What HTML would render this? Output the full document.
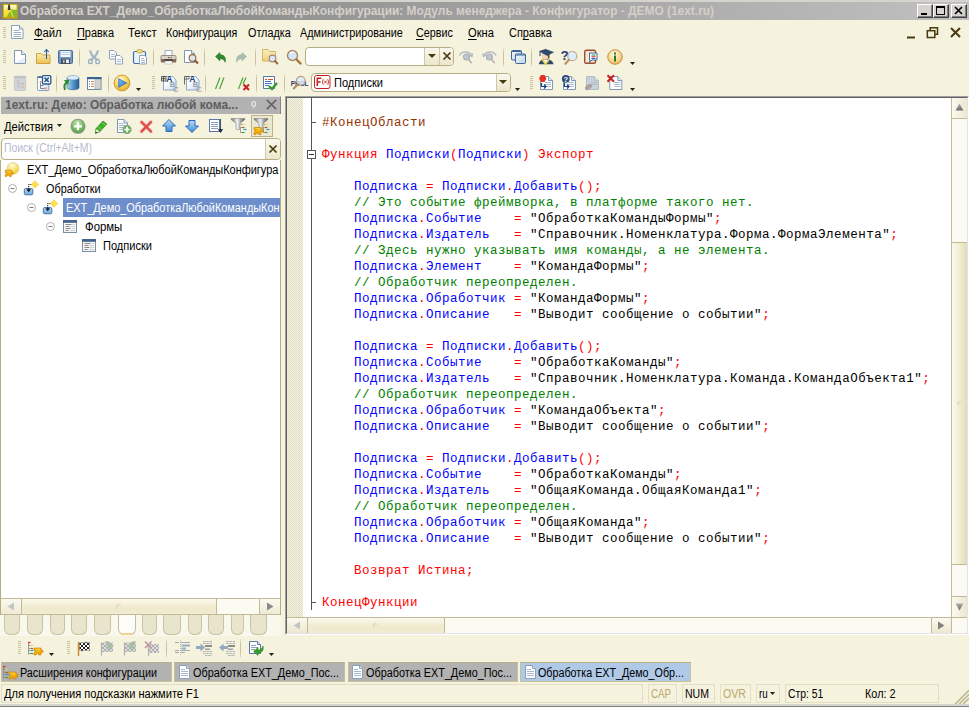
<!DOCTYPE html>
<html><head><meta charset="utf-8"><title>1C</title>
<style>
html,body{margin:0;padding:0}
body{width:969px;height:707px;overflow:hidden;position:relative;background:#f5f2dd;font-family:"Liberation Sans",sans-serif;font-size:11px;color:#000}
div,span.t,svg{position:absolute;box-sizing:border-box}
.t{white-space:pre}
u{text-decoration:underline;text-underline-offset:2px}
svg{overflow:visible}
#code{left:306px;top:98px;width:645px;height:519px;background:#fff;overflow:hidden;font-family:"Liberation Mono",monospace;font-size:12.5px;letter-spacing:0.5px;color:#00f}
#code .l{left:16px;white-space:pre;height:16px;line-height:16px}
.r{color:#f00}.g{color:#008000}.k{color:#000}.b{color:#963200}
</style></head><body>
<div style="left:0px;top:0px;width:969px;height:2px;background:#d6d3ce"></div>
<div style="left:0px;top:2px;width:969px;height:18px;background:linear-gradient(90deg,#808080,#c0c0c0)"></div>
<svg style="left:3px;top:3px" width="16" height="16" viewBox="0 0 16 16"><defs><linearGradient id="gap" x1="0" y1="0" x2="0" y2="1"><stop offset="0" stop-color="#fffbe4"/><stop offset=".45" stop-color="#f8e868"/><stop offset="1" stop-color="#f0d000"/></linearGradient></defs><rect x=".5" y="1.500" width="13.500" height="13.500" fill="url(#gap)" stroke="#d8b400" stroke-width="1"/><path d="M4 14l3.500-7.500L14 7v7z" fill="#8ab830"/><path d="M2 14L5.200 7M7.300 7l2.700 7" stroke="#f4e020" stroke-width="1.300" fill="none"/><path d="M5.300 1.500h1.600l.6 5.500h-2.800z" fill="#3a3a30"/><path d="M1 14.500h13" stroke="#c8a000" stroke-width="1"/></svg>
<span class="t" style="left:20px;top:3px;font-size:12px;line-height:16px;height:16px;font-weight:bold;transform:scaleX(0.9934);transform-origin:0 0;color:#d4d0c8;">Обработка EXT_Демо_ОбработкаЛюбойКомандыКонфигурации: Модуль менеджера - Конфигуратор - ДЕМО (1ext.ru)</span>
<div style="left:917px;top:4px;width:16px;height:14px;background:#d6d3ce;border:1px solid;border-color:#fff #404040 #404040 #fff;box-shadow:inset -1px -1px 0 #808080"></div>
<svg style="left:917px;top:4px" width="16" height="14" viewBox="0 0 16 14"><rect x="4" y="9" width="6" height="2" fill="#000"/></svg>
<div style="left:933px;top:4px;width:16px;height:14px;background:#d6d3ce;border:1px solid;border-color:#fff #404040 #404040 #fff;box-shadow:inset -1px -1px 0 #808080"></div>
<svg style="left:933px;top:4px" width="16" height="14" viewBox="0 0 16 14"><rect x="3.5" y="2.5" width="8" height="8" fill="none" stroke="#000"/><rect x="3" y="2" width="9" height="2" fill="#000"/></svg>
<div style="left:951px;top:4px;width:16px;height:14px;background:#d6d3ce;border:1px solid;border-color:#fff #404040 #404040 #fff;box-shadow:inset -1px -1px 0 #808080"></div>
<svg style="left:951px;top:4px" width="16" height="14" viewBox="0 0 16 14"><path d="M4 3l7 7M11 3l-7 7" stroke="#000" stroke-width="1.6"/></svg>
<div style="left:3px;top:27px;width:3px;height:11px;background:repeating-linear-gradient(#c9c2a0 0,#c9c2a0 1px,transparent 1px,transparent 2px)"></div>
<svg style="left:11px;top:25px" width="13" height="14" viewBox="0 0 13 14"><path d="M.5.5h8l3.500 3.500v9.500h-11.500z" fill="#fff" stroke="#8aa0b8"/><path d="M8.500.5v3.500h3.500" fill="#dfe8f2" stroke="#8aa0b8"/><path d="M2.500 5.500h6M2.500 7.500h7.500M2.500 9.500h7.500M2.500 11.500h7.500" stroke="#9db0c6"/></svg>
<span class="t" style="left:33.5px;top:25px;font-size:12px;line-height:16px;height:16px;transform:scaleX(0.9385);transform-origin:0 0;color:#000;"><u>Ф</u>айл</span>
<span class="t" style="left:77px;top:25px;font-size:12px;line-height:16px;height:16px;transform:scaleX(0.9125);transform-origin:0 0;color:#000;"><u>П</u>равка</span>
<span class="t" style="left:127.6px;top:25px;font-size:12px;line-height:16px;height:16px;transform:scaleX(0.9497);transform-origin:0 0;color:#000;">Текст</span>
<span class="t" style="left:166.3px;top:25px;font-size:12px;line-height:16px;height:16px;transform:scaleX(0.8854);transform-origin:0 0;color:#000;">Конфигурация</span>
<span class="t" style="left:247.5px;top:25px;font-size:12px;line-height:16px;height:16px;transform:scaleX(0.9001);transform-origin:0 0;color:#000;">Отладка</span>
<span class="t" style="left:300.1px;top:25px;font-size:12px;line-height:16px;height:16px;transform:scaleX(0.8983);transform-origin:0 0;color:#000;">Администрирование</span>
<span class="t" style="left:415.5px;top:25px;font-size:12px;line-height:16px;height:16px;transform:scaleX(0.8955);transform-origin:0 0;color:#000;"><u>С</u>ервис</span>
<span class="t" style="left:467.5px;top:25px;font-size:12px;line-height:16px;height:16px;transform:scaleX(0.9286);transform-origin:0 0;color:#000;"><u>О</u>кна</span>
<span class="t" style="left:508.5px;top:25px;font-size:12px;line-height:16px;height:16px;transform:scaleX(0.9091);transform-origin:0 0;color:#000;">Сп<u>р</u>авка</span>
<svg style="left:906px;top:26px" width="12" height="14" viewBox="0 0 12 14"><rect x="1" y="10.500" width="8" height="2" fill="#4a3a10"/></svg>
<svg style="left:926px;top:26px" width="13" height="14" viewBox="0 0 13 14"><path d="M4.200 4V1.800h7.300v6.500h-2.300" fill="none" stroke="#4a3a10" stroke-width="1.500"/><rect x="1.300" y="4.700" width="7.500" height="6.800" fill="none" stroke="#4a3a10" stroke-width="1.500"/></svg>
<svg style="left:949px;top:26px" width="13" height="14" viewBox="0 0 13 14"><path d="M2 2l9 9M11 2l-9 9" stroke="#4a3a10" stroke-width="2"/></svg>
<div style="left:3px;top:50px;width:3px;height:13px;background:repeating-linear-gradient(#c9c2a0 0,#c9c2a0 1px,transparent 1px,transparent 2px)"></div>
<svg style="left:12px;top:49px" width="16" height="16" viewBox="0 0 16 16"><path d="M2.500 1.500h7l4 4v9h-11z" fill="#fff" stroke="#7f97b5"/><path d="M9.500 1.500v4h4" fill="#e4ecf5" stroke="#7f97b5"/><path d="M3 14h10V8z" fill="#dbe6f3" opacity=".7"/></svg>
<svg style="left:35px;top:49px" width="16" height="16" viewBox="0 0 16 16"><defs><linearGradient id="gof" x1="0" y1="0" x2="0" y2="1"><stop offset="0" stop-color="#fbeeb8"/><stop offset="1" stop-color="#ecc050"/></linearGradient></defs><path d="M1.500 4.500h4.500l1.500 1.500h7.500v8.500h-13.500z" fill="url(#gof)" stroke="#c89c38" stroke-width=".9"/><path d="M11.500 10V.8M9.300 3l2.200-2.400 2.200 2.400" stroke="#2e6090" stroke-width="1.100" fill="none"/></svg>
<svg style="left:57px;top:49px" width="16" height="16" viewBox="0 0 16 16"><rect x="1.500" y="1.500" width="14" height="13" rx="1" fill="#7299c8" stroke="#456e9c"/><rect x="3.500" y="2" width="10" height="6" fill="#f4f8fc"/><path d="M4.500 3.500h8M4.500 5.500h8" stroke="#b4cce4"/><rect x="4.500" y="10" width="8" height="4.500" fill="#e8eef4" stroke="#48505c" stroke-width="1"/><rect x="5" y="10.500" width="4" height="3.500" fill="#48505c"/><rect x="6" y="11.500" width="1.500" height="2" fill="#e8eef4"/></svg>
<div style="left:79px;top:48px;width:1px;height:19px;background:linear-gradient(#ece8d2,#c9c2a0 25%,#c9c2a0 75%,#ece8d2)"></div>
<svg style="left:86px;top:49px" width="16" height="16" viewBox="0 0 16 16"><path d="M4 1.500c1 4 3 7 7.500 9.500M12 1.500c-1 4-3 7-7.500 9.500" stroke="#a3b5c8" stroke-width="2.200" fill="none"/><rect x="2.600" y="10.600" width="3.600" height="4" rx="1.400" fill="none" stroke="#97abc0" stroke-width="1.300"/><rect x="9.800" y="10.600" width="3.600" height="4" rx="1.400" fill="none" stroke="#97abc0" stroke-width="1.300"/></svg>
<svg style="left:108px;top:49px" width="16" height="16" viewBox="0 0 16 16"><path d="M1.500 1.500h4.500l2.500 2.500v6h-7z" fill="#fff" stroke="#8ea3bf"/><path d="M3 5.500h4M3 7.500h4" stroke="#a8b8cc"/><path d="M7.500 6.500h4.500l2.500 2.500v6h-7z" fill="#fff" stroke="#8ea3bf"/><path d="M9 10.500h4M9 12.500h4" stroke="#a8b8cc"/></svg>
<svg style="left:132px;top:49px" width="16" height="16" viewBox="0 0 16 16"><rect x="1.500" y="2.500" width="12" height="12" rx="1.500" fill="#eaf1f9" stroke="#3a6fb0" stroke-width="1.200"/><rect x="5" y=".8" width="5.500" height="3" rx="1.200" fill="#f6e27c" stroke="#b89a30" stroke-width=".8"/><path d="M7.500 6.500h5l2 2v6.500h-7z" fill="#fff" stroke="#8ea3bf"/><path d="M9 9.500h3M9 11.500h4M9 13.500h4" stroke="#a8b8cc"/></svg>
<div style="left:153px;top:48px;width:1px;height:19px;background:linear-gradient(#ece8d2,#c9c2a0 25%,#c9c2a0 75%,#ece8d2)"></div>
<svg style="left:160px;top:49px" width="16" height="16" viewBox="0 0 16 16"><rect x="5" y="1.500" width="7" height="5" fill="#fff" stroke="#9aaec4"/><path d="M2 6.500h13c.8 0 1 .5 1 1v5h-15v-5c0-.5.200-1 1-1z" fill="#d9d3cd" stroke="#8a7e76" stroke-width=".8"/><path d="M1 10h15v3.500h-15z" fill="#8a6a5a"/><rect x="4.500" y="10.500" width="8" height="2" fill="#222"/><rect x="5" y="12" width="7" height="3" fill="#fff" stroke="#b0b0b0" stroke-width=".6"/><rect x="8" y="8" width="1.500" height="1.200" fill="#e03020"/><rect x="10.500" y="8" width="1.500" height="1.200" fill="#30a030"/></svg>
<svg style="left:183px;top:49px" width="16" height="16" viewBox="0 0 16 16"><path d="M1.500 1.500h7l3 3v9h-10z" fill="#fff" stroke="#7f97b5"/><path d="M8.500 1.500v3h3" fill="#e4ecf5" stroke="#7f97b5"/><circle cx="9.500" cy="9" r="3.300" fill="#d8e9f8" stroke="#a06a48" stroke-width="1.200"/><path d="M12 11.500l3 3" stroke="#8a4a28" stroke-width="2"/></svg>
<div style="left:204px;top:48px;width:1px;height:19px;background:linear-gradient(#ece8d2,#c9c2a0 25%,#c9c2a0 75%,#ece8d2)"></div>
<svg style="left:213px;top:49px" width="16" height="16" viewBox="0 0 16 16"><path d="M2.500 7.500l4.500-4v2.300c3.500 0 5.500 1.800 5.500 5.500 0 .8-.2 1.500-.5 2C11.500 11 10 9.700 7 9.700v2.300z" fill="#2f8a2f" stroke="#1f6a1f" stroke-width=".5"/></svg>
<svg style="left:233px;top:49px" width="16" height="16" viewBox="0 0 16 16"><path d="M13.500 7.500L9 3.500v2.300c-3.500 0-5.500 1.800-5.500 5.500 0 .8.200 1.500.5 2C4.500 11 6 9.700 9 9.700v2.300z" fill="#a9bfae" stroke="#9ab3a0" stroke-width=".5"/></svg>
<div style="left:255px;top:48px;width:1px;height:19px;background:linear-gradient(#ece8d2,#c9c2a0 25%,#c9c2a0 75%,#ece8d2)"></div>
<svg style="left:262px;top:49px" width="16" height="16" viewBox="0 0 16 16"><defs><linearGradient id="gff" x1="0" y1="0" x2="0" y2="1"><stop offset="0" stop-color="#fbefc0"/><stop offset="1" stop-color="#efcf74"/></linearGradient></defs><path d="M.5 .5h5.500l1.500 2h6v9.500H.5z" fill="url(#gff)" stroke="#d0b060" stroke-width=".9"/><circle cx="10.500" cy="9.500" r="3.300" fill="#d8e9f8" stroke="#a88870" stroke-width="1.200"/><path d="M13 12l2.300 2.500" stroke="#a06840" stroke-width="2" stroke-linecap="round"/></svg>
<svg style="left:286px;top:49px" width="16" height="16" viewBox="0 0 16 16"><circle cx="6.500" cy="6.500" r="5" fill="#d3e6f8" stroke="#b08868" stroke-width="1.400"/><path d="M4 5a3 3 0 0 1 4-1.500" stroke="#fff" stroke-width="1.200" fill="none"/><path d="M10.500 10.500l4 4" stroke="#a8703c" stroke-width="2.400" stroke-linecap="round"/></svg>
<div style="left:305px;top:47px;width:149px;height:19px;background:#fff;border:1px solid #b7ad83;border-radius:4px"></div>
<div style="left:424px;top:48px;width:29px;height:17px;background:linear-gradient(#faf8ee,#ebe6cb);border-left:1px solid #cfc8a6;border-radius:0 3px 3px 0"></div>
<div style="left:439px;top:48px;width:1px;height:17px;background:#cfc8a6"></div>
<svg style="left:428px;top:54px" width="8" height="5" viewBox="0 0 8 5"><path d="M0 0h8l-4 4z" fill="#4a3a10"/></svg>
<svg style="left:442px;top:51px" width="10" height="10" viewBox="0 0 10 10"><path d="M1.500 1.500l7 7M8.500 1.500l-7 7" stroke="#4a3a10" stroke-width="1.700"/></svg>
<svg style="left:458px;top:49px" width="16" height="16" viewBox="0 0 16 16"><path d="M1.500 6.500c2-4.500 9-4.500 12-.5" fill="none" stroke="#b4bcc8" stroke-width="1.500"/><path d="M15.500 4l-1 4.500-3.700-2z" fill="#b4bcc8"/><circle cx="8.500" cy="8" r="3" fill="#bcc8d8" stroke="#b4acb4" stroke-width="1.100"/><path d="M10.500 10.500l2.700 3" stroke="#bcb0b0" stroke-width="1.800" stroke-linecap="round"/></svg>
<svg style="left:481px;top:49px" width="16" height="16" viewBox="0 0 16 16"><path d="M15 6.500c-2-4.500-9-4.500-12-.5" fill="none" stroke="#b4bcc8" stroke-width="1.500"/><path d="M1 4l1 4.500 3.700-2z" fill="#b4bcc8"/><circle cx="8.500" cy="8" r="3" fill="#bcc8d8" stroke="#b4acb4" stroke-width="1.100"/><path d="M10.500 10.500l2.700 3" stroke="#bcb0b0" stroke-width="1.800" stroke-linecap="round"/></svg>
<div style="left:503px;top:48px;width:1px;height:19px;background:linear-gradient(#ece8d2,#c9c2a0 25%,#c9c2a0 75%,#ece8d2)"></div>
<svg style="left:510px;top:49px" width="16" height="16" viewBox="0 0 16 16"><defs><linearGradient id="gw" x1="0" y1="0" x2="1" y2="1"><stop offset="0" stop-color="#f4f8fc"/><stop offset="1" stop-color="#bcd2ea"/></linearGradient></defs><rect x="1.500" y="1.500" width="10" height="9.500" rx="1" fill="url(#gw)" stroke="#3f6496"/><path d="M1.500 2.500h10" stroke="#3f6496"/><rect x="5.500" y="5" width="10" height="9.500" rx="1" fill="url(#gw)" stroke="#3f6496"/><path d="M5.500 6h10" stroke="#3f6496"/></svg>
<div style="left:531px;top:48px;width:1px;height:19px;background:linear-gradient(#ece8d2,#c9c2a0 25%,#c9c2a0 75%,#ece8d2)"></div>
<svg style="left:538px;top:49px" width="16" height="16" viewBox="0 0 16 16"><path d="M.8 15.200c.4-3 2.700-4.500 4.700-5h4.500c2.500.5 5 2 5.500 5z" fill="#2a4a6c"/><path d="M4.300 10.800l3.200 4.400 3.500-4.400" stroke="#f0c838" stroke-width="1.500" fill="#fff"/><path d="M4.500 4h6v4.500c0 2.700-6 2.700-6 0z" fill="#f4d8b8" stroke="#d0a880" stroke-width=".4"/><path d="M8.800 4h2.700v4.800l-1.800 1.200c.5-2 .3-4-.9-6z" fill="#6a4a30"/><path d="M1.500 2.300L7.500 .3l8 3-6.500 3.200z" fill="#2c4c70" stroke="#1c3450" stroke-width=".5"/><path d="M2 2.500v4.500" stroke="#1c3450" stroke-width=".9"/></svg>
<svg style="left:561px;top:49px" width="16" height="16" viewBox="0 0 16 16"><text x="-.6" y="11.300" font-family="Liberation Sans" font-weight="bold" font-size="13.500" fill="#1c3c78">?</text><circle cx="11.300" cy="7.200" r="4.500" fill="#dcebf9" stroke="#c4aa94" stroke-width="1.200"/><path d="M8 10.800l-3.600 4" stroke="#c09068" stroke-width="2.200" stroke-linecap="round"/><path d="M8.800 5.500a3 3 0 0 1 3-1.500" stroke="#fff" stroke-width="1" fill="none"/></svg>
<svg style="left:583px;top:49px" width="16" height="16" viewBox="0 0 16 16"><rect x="1.700" y="1.200" width="10.800" height="13" rx="1.500" fill="#fbe8d2" stroke="#9a5030" stroke-width="1.400"/><path d="M6.500 4h7.500v7h-5l-2.700 2.500 1-2.500h-.8z" fill="#fff" stroke="#2c5ca4" stroke-width=".9"/><path d="M8.500 6h4" stroke="#3a9a3a" stroke-width="1.100"/><path d="M8.500 7.800h4" stroke="#d03030" stroke-width="1.100"/><path d="M8.500 9.500h4" stroke="#3060c0" stroke-width="1.100"/></svg>
<svg style="left:607px;top:49px" width="16" height="16" viewBox="0 0 16 16"><defs><radialGradient id="gi" cx=".45" cy=".35" r=".75"><stop offset="0" stop-color="#fffaea"/><stop offset=".55" stop-color="#f8d690"/><stop offset="1" stop-color="#e8a840"/></radialGradient></defs><circle cx="8" cy="8" r="7.300" fill="url(#gi)" stroke="#c08a40" stroke-width=".9"/><rect x="7" y="6.500" width="2" height="6" fill="#2a7a2a"/><rect x="7" y="3.500" width="2" height="2" fill="#2a7a2a"/></svg>
<svg style="left:630px;top:62px" width="6" height="3" viewBox="0 0 6 3"><path d="M0 0h5l-2.500 3z" fill="#222"/></svg>
<div style="left:3px;top:76px;width:3px;height:13px;background:repeating-linear-gradient(#c9c2a0 0,#c9c2a0 1px,transparent 1px,transparent 2px)"></div>
<svg style="left:12px;top:76px" width="16" height="16" viewBox="0 0 16 16"><rect x="2.300" y=".3" width="11.400" height="14.200" rx=".8" fill="#d0d4d9" stroke="#c2c6cc" stroke-width=".8"/><rect x="2.300" y=".3" width="11.400" height="1.800" fill="#bcc0c8"/><path d="M6 5.500v5.500h4M6 7.800h4" stroke="#b4bcc8" stroke-width=".8" fill="none"/><rect x="5" y="3.700" width="2" height="1.800" fill="#e0b8a0"/><rect x="10" y="6.900" width="2" height="1.800" fill="#e0b8a0"/><rect x="10" y="10" width="2" height="1.800" fill="#e0b8a0"/></svg>
<svg style="left:36px;top:76px" width="16" height="16" viewBox="0 0 16 16"><defs><linearGradient id="gtx" x1="0" y1="0" x2="1" y2="1"><stop offset=".3" stop-color="#fff"/><stop offset="1" stop-color="#cce0f4"/></linearGradient></defs><rect x="1.500" y=".5" width="11.300" height="14" rx=".8" fill="url(#gtx)" stroke="#7f9cc0" stroke-width=".9"/><path d="M1.500 1.200h11.300" stroke="#3a6898" stroke-width="1.500"/><path d="M4.500 7v5.500h4M4.500 9.500h3" stroke="#6a6a6a" stroke-width=".8" fill="none"/><rect x="3.700" y="5" width="1.800" height="1.800" fill="#e09060"/><rect x="8.500" y="11.500" width="2" height="1.800" fill="#e09060"/><rect x="6.500" y="-.3" width="8.300" height="8.300" rx="1" fill="#fff" stroke="#2a5a8c" stroke-width="1.300"/><path d="M8.500 1.700l4.300 4.300M12.800 1.700l-4.300 4.300" stroke="#2a5a8c" stroke-width="1.700"/></svg>
<div style="left:56px;top:74px;width:1px;height:19px;background:linear-gradient(#ece8d2,#c9c2a0 25%,#c9c2a0 75%,#ece8d2)"></div>
<svg style="left:62px;top:76px" width="18" height="16" viewBox="0 0 18 16"><defs><linearGradient id="gdb" x1="0" x2="1"><stop offset="0" stop-color="#b0d6f2"/><stop offset=".45" stop-color="#5c9cd0"/><stop offset="1" stop-color="#245a92"/></linearGradient></defs><path d="M5 1.800v9.700c0 3 12 3 12 0V1.800z" fill="url(#gdb)" stroke="#2c5c94" stroke-width=".6"/><ellipse cx="11" cy="1.800" rx="6" ry="2.200" fill="#dceef9" stroke="#6a98c4" stroke-width=".6"/><path d="M3 13.800c-1.300-3.500-.5-6 2-7.500" fill="none" stroke="#2f8a2f" stroke-width="2"/><path d="M1.800 4.300l5.400-.6-1 5.300z" fill="#2f8a2f"/></svg>
<svg style="left:86px;top:76px" width="16" height="16" viewBox="0 0 16 16"><rect x="1.500" y="1.500" width="13.500" height="12" fill="#fff" stroke="#5c7ca4" stroke-width=".9"/><rect x="1" y="1" width="14.500" height="2.200" fill="#3a6494"/><rect x="9" y="3.500" width="5.500" height="9.500" fill="#d2d2d2" stroke="#a8a8a8" stroke-width=".6"/><path d="M3 5.500h1M3 8h1M3 10.500h1" stroke="#4a78b8"/><path d="M5 5.500h3M5 8h3M5 10.500h3" stroke="#d88858"/></svg>
<div style="left:108px;top:74px;width:1px;height:19px;background:linear-gradient(#ece8d2,#c9c2a0 25%,#c9c2a0 75%,#ece8d2)"></div>
<svg style="left:113px;top:74px" width="18" height="18" viewBox="0 0 18 18"><defs><radialGradient id="gp" cx=".42" cy=".3" r=".8"><stop offset="0" stop-color="#fffbe0"/><stop offset=".5" stop-color="#f8d458"/><stop offset="1" stop-color="#dc9c20"/></radialGradient><linearGradient id="gpt" x1="0" y1="0" x2="1" y2="1"><stop offset="0" stop-color="#7cc0f8"/><stop offset="1" stop-color="#2c74d0"/></linearGradient></defs><circle cx="9" cy="9" r="7.900" fill="url(#gp)" stroke="#c8942c" stroke-width=".9"/><path d="M5.700 4.700l8 4.300-8 4.300z" fill="url(#gpt)" stroke="#2a62b0" stroke-width=".7"/></svg>
<svg style="left:136px;top:88px" width="6" height="3" viewBox="0 0 6 3"><path d="M0 0h5l-2.500 3z" fill="#222"/></svg>
<div style="left:152px;top:76px;width:3px;height:13px;background:repeating-linear-gradient(#c9c2a0 0,#c9c2a0 1px,transparent 1px,transparent 2px)"></div>
<svg style="left:161px;top:75px" width="18" height="17" viewBox="0 0 18 17"><defs><linearGradient id="gabc" x1="0" y1="0" x2="1" y2="1"><stop offset=".3" stop-color="#fff"/><stop offset="1" stop-color="#c4dcf2"/></linearGradient></defs><path d="M2.500 1.500h9l3.500 3.500v10h-12.500z" fill="url(#gabc)" stroke="#86a0c0" stroke-width=".9"/><text x="5.300" y="6.600" font-family="Liberation Sans" font-weight="bold" font-size="8.500" fill="#1c3c78">A</text><text x="8.800" y="12" font-family="Liberation Sans" font-size="8" fill="#7c8088">B</text><text x="12" y="16.800" font-family="Liberation Sans" font-size="8" fill="#8c9098">C</text><path d="M.5 1.500h4.500v4.500h-4.500zM.5 3.700h4.500M2.700 1.500v4.500" stroke="#3a3a3a" stroke-width=".8" fill="none"/></svg>
<svg style="left:184px;top:75px" width="18" height="17" viewBox="0 0 18 17"><defs><linearGradient id="gabc" x1="0" y1="0" x2="1" y2="1"><stop offset=".3" stop-color="#fff"/><stop offset="1" stop-color="#c4dcf2"/></linearGradient></defs><path d="M2.500 1.500h9l3.500 3.500v10h-12.500z" fill="url(#gabc)" stroke="#86a0c0" stroke-width=".9"/><text x="5.300" y="6.600" font-family="Liberation Sans" font-weight="bold" font-size="8.500" fill="#1c3c78">A</text><text x="8.800" y="12" font-family="Liberation Sans" font-size="8" fill="#7c8088">B</text><text x="12" y="16.800" font-family="Liberation Sans" font-size="8" fill="#8c9098">C</text><path d="M.5 1.500h4.500v2.500h-4.500zM.5 4v5.500" stroke="#4a4a4a" stroke-width=".8" fill="none"/></svg>
<div style="left:205px;top:74px;width:1px;height:19px;background:linear-gradient(#ece8d2,#c9c2a0 25%,#c9c2a0 75%,#ece8d2)"></div>
<svg style="left:213px;top:75px" width="16" height="16" viewBox="0 0 16 16"><path d="M2.500 14L7 2.500M6.500 14L11 2.500" stroke="#4aa83a" stroke-width="1.200"/></svg>
<svg style="left:236px;top:75px" width="16" height="16" viewBox="0 0 16 16"><path d="M2.500 14L7 2.500M7 9l3-6.500" stroke="#4aa83a" stroke-width="1.200"/><path d="M7.500 9.500l5.500 5.500M13 9.500l-5.500 5.500" stroke="#c82020" stroke-width="2"/></svg>
<div style="left:256px;top:74px;width:1px;height:19px;background:linear-gradient(#ece8d2,#c9c2a0 25%,#c9c2a0 75%,#ece8d2)"></div>
<svg style="left:262px;top:75px" width="16" height="16" viewBox="0 0 16 16"><path d="M1.500 1.500h11v12h-11z" fill="#fff" stroke="#5a78a8"/><path d="M3 4.500h2M6 4.500h5" stroke="#d05030"/><path d="M3 6.500h6M3 8.500h7" stroke="#4a78c0"/><path d="M3 10.500h4" stroke="#4a78c0"/><path d="M7 11l3 3 5-6" stroke="#2f9a2f" stroke-width="2.400" fill="none"/></svg>
<div style="left:284px;top:74px;width:1px;height:19px;background:linear-gradient(#ece8d2,#c9c2a0 25%,#c9c2a0 75%,#ece8d2)"></div>
<svg style="left:290px;top:75px" width="18" height="16" viewBox="0 0 18 16"><text x=".8" y="10.500" font-family="Liberation Sans" font-weight="bold" font-size="6.500" fill="#1c3c78" letter-spacing="-.1">PROL</text><circle cx="10.800" cy="5.700" r="4.300" fill="#d8e9f8" fill-opacity=".8" stroke="#b8a090" stroke-width="1.200"/><path d="M7.800 9.200l-4 4.300" stroke="#b88858" stroke-width="2" stroke-linecap="round"/></svg>
<div style="left:311px;top:73px;width:200px;height:19px;background:#fff;border:1px solid #b7ad83;border-radius:4px"></div>
<div style="left:496px;top:74px;width:14px;height:17px;background:linear-gradient(#faf8ee,#ebe6cb);border-left:1px solid #cfc8a6;border-radius:0 3px 3px 0"></div>
<svg style="left:499px;top:80px" width="8" height="5" viewBox="0 0 8 5"><path d="M0 0h8l-4 4z" fill="#4a3a10"/></svg>
<svg style="left:314px;top:75px" width="17" height="14" viewBox="0 0 17 14"><rect x=".5" y=".5" width="15.500" height="13" rx="2" fill="#fff" stroke="#c42020"/><path d="M3.300 11V3.300h4M3.300 7h3.200" stroke="#c42020" stroke-width="1.500" fill="none"/><path d="M9.300 4.200c-1 1.500-1 4 0 5.600M13.700 4.200c1 1.500 1 4 0 5.600" stroke="#c42020" stroke-width=".9" fill="none"/><path d="M10.300 5.600l2.400 2.800M12.700 5.600l-2.400 2.800" stroke="#c42020" stroke-width=".9"/></svg>
<span class="t" style="left:334.2px;top:75px;font-size:12px;line-height:16px;height:16px;transform:scaleX(0.9210);transform-origin:0 0;color:#000;">Подписки</span>
<svg style="left:515px;top:88px" width="6" height="3" viewBox="0 0 6 3"><path d="M0 0h5l-2.500 3z" fill="#222"/></svg>
<div style="left:530px;top:76px;width:3px;height:13px;background:repeating-linear-gradient(#c9c2a0 0,#c9c2a0 1px,transparent 1px,transparent 2px)"></div>
<svg style="left:538px;top:74px" width="16" height="17" viewBox="0 0 16 17"><path d="M2.500 2.500h8l4 4v9h-12z" fill="#fff" stroke="#7f97b5"/><path d="M10.500 2.500v4h4" fill="#e4ecf5" stroke="#7f97b5"/><path d="M7 8.500h6M7 10.500h6M7 12.500h6" stroke="#a8bcd4"/><path d="M3.500 9v3.500h4M6 10.500l2 2-2 2" stroke="#1c3c78" stroke-width="1.200" fill="none"/><path d="M3 1l3.500 0 2 3.500-2 3.500h-3.500l-2-3.500z" fill="#e83020"/></svg>
<svg style="left:560.5px;top:74px" width="16" height="17" viewBox="0 0 16 17"><path d="M2.500 2.500h8l4 4v9h-12z" fill="#fff" stroke="#7f97b5"/><path d="M10.500 2.500v4h4" fill="#e4ecf5" stroke="#7f97b5"/><path d="M7 8.500h6M7 10.500h6M7 12.500h6" stroke="#a8bcd4"/><path d="M3.500 9v3.500h4M6 10.500l2 2-2 2" stroke="#1c3c78" stroke-width="1.200" fill="none"/><circle cx="4.800" cy="4.800" r="3.900" fill="#2a4a78"/><text x="2.600" y="7.600" font-family="Liberation Sans" font-weight="bold" font-size="7.500" fill="#fff">?</text></svg>
<svg style="left:584px;top:74px" width="16" height="17" viewBox="0 0 16 17"><path d="M2.500 2.500h8l4 4v9h-12z" fill="#c8d0d8" stroke="#b4bcc8"/><path d="M10.500 2.500v4h4" fill="#d8dee6" stroke="#b4bcc8"/><path d="M7 8.500h6M7 10.500h6" stroke="#b0bac6"/><ellipse cx="4.500" cy="13" rx="4" ry="2.300" transform="rotate(-35 4.500 13)" fill="#a8a4a4"/></svg>
<svg style="left:606px;top:74px" width="16" height="17" viewBox="0 0 16 17"><g transform="translate(1.300 0)"><path d="M2.500 2.500h8l4 4v9h-12z" fill="#fff" stroke="#7f97b5"/><path d="M10.500 2.500v4h4" fill="#e4ecf5" stroke="#7f97b5"/><path d="M7 8.500h6M7 10.500h6M7 12.500h6" stroke="#a8bcd4"/></g><path d="M1.500 1.300l6.500 6.500M8 1.300l-6.500 6.500" stroke="#c82020" stroke-width="2"/></svg>
<svg style="left:630px;top:88px" width="6" height="3" viewBox="0 0 6 3"><path d="M0 0h5l-2.500 3z" fill="#222"/></svg>
<div style="left:1px;top:96px;width:280px;height:18px;background:#b2b2b2;border-top:1px solid #e4e4e4;border-right:1px solid #858585"></div>
<span class="t" style="left:5px;top:97px;font-size:12px;line-height:16px;height:16px;font-weight:bold;transform:scaleX(0.9960);transform-origin:0 0;color:#5e5e5e;">1ext.ru: Демо: Обработка любой кома...</span>
<svg style="left:251.3px;top:101px" width="6" height="9" viewBox="0 0 6 9"><rect x="1" y=".5" width="3.600" height="4.800" rx="1.300" fill="#b8b8b8" stroke="#f4f4f4" stroke-width="1"/><rect x="2.400" y="5.500" width=".9" height="2.200" fill="#e4e4e4"/></svg>
<svg style="left:266px;top:99.3px" width="11" height="11" viewBox="0 0 11 11"><path d="M.8 .8l9.400 9.400M10.200 .8l-9.400 9.400" stroke="#666" stroke-width="1.700"/></svg>
<span class="t" style="left:4.3px;top:119px;font-size:12px;line-height:16px;height:16px;transform:scaleX(0.9319);transform-origin:0 0;color:#000;">Действия</span>
<svg style="left:57px;top:124px" width="6" height="3" viewBox="0 0 6 3"><path d="M0 0h5l-2.500 3z" fill="#222"/></svg>
<div style="left:251px;top:115px;width:22px;height:22px;background:#ece8d0;border:1.500px solid #bab28e"></div>
<svg style="left:70px;top:118px" width="16" height="16" viewBox="0 0 16 16"><defs><radialGradient id="gg" cx=".45" cy=".25" r=".85"><stop offset="0" stop-color="#c4e8b0"/><stop offset=".55" stop-color="#74b860"/><stop offset="1" stop-color="#4a9838"/></radialGradient></defs><circle cx="8" cy="8.300" r="7" fill="url(#gg)" stroke="#8a988a" stroke-width="1.100"/><path d="M8 4.300v8M4 8.300h8" stroke="#fff" stroke-width="2.200"/></svg>
<svg style="left:93px;top:118px" width="16" height="16" viewBox="0 0 16 16"><path d="M3.200 10.500l6.800-7.500 3.800 3-6.800 7.500-4.500 1.800z" fill="#3cb424" stroke="#1f7a1f" stroke-width=".7"/><path d="M5 8.800l3.600 3M9 4.500l3.500 2.800" stroke="#8ae070" stroke-width=".7"/><path d="M3.200 10.500l3.800 3-4.500 1.800z" fill="#fbf4e0" stroke="#1f7a1f" stroke-width=".5"/><path d="M2.500 15.300l1.600-.6-1-.9z" fill="#222"/></svg>
<svg style="left:116px;top:118px" width="16" height="16" viewBox="0 0 16 16"><path d="M1.500 1.500h6.500l3.500 3.500v9.500h-10z" fill="#fff" stroke="#7f97b5"/><path d="M8 1.500v3.500h3.500" fill="#e4ecf5" stroke="#7f97b5"/><path d="M3 5.500h4M3 7.500h6M3 9.500h5M3 11.500h3" stroke="#a8b8cc"/><circle cx="11" cy="11.500" r="4.200" fill="#68b454" stroke="#90a090" stroke-width=".9"/><path d="M11 8.800v5.400M8.300 11.500h5.400" stroke="#fff" stroke-width="1.700"/></svg>
<svg style="left:138px;top:118px" width="16" height="16" viewBox="0 0 16 16"><path d="M3.500 4l9.500 9.500M13 4l-9.500 9.500" stroke="#f0a8a0" stroke-width="3.200" stroke-linecap="round"/><path d="M3.500 4l9.500 9.500M13 4l-9.500 9.500" stroke="#de4a40" stroke-width="1.900" stroke-linecap="round"/></svg>
<svg style="left:161px;top:118px" width="16" height="16" viewBox="0 0 16 16"><defs><linearGradient id="gu" x1="0" y1="0" x2="0" y2="1"><stop offset="0" stop-color="#b8dcf8"/><stop offset="1" stop-color="#3f8ad8"/></linearGradient></defs><path d="M8 1.500l6.500 6.500h-3.500v5.500h-6v-5.500h-3.500z" fill="url(#gu)" stroke="#2f6ab8" stroke-width="1"/></svg>
<svg style="left:184px;top:118px" width="16" height="16" viewBox="0 0 16 16"><defs><linearGradient id="gd" x1="0" y1="0" x2="0" y2="1"><stop offset="0" stop-color="#b8dcf8"/><stop offset="1" stop-color="#3f8ad8"/></linearGradient></defs><path d="M8 14.500l6.500-6.500h-3.500v-5.500h-6v5.500h-3.500z" fill="url(#gd)" stroke="#2f6ab8" stroke-width="1"/></svg>
<svg style="left:208px;top:118px" width="16" height="16" viewBox="0 0 16 16"><rect x="1.500" y="1.500" width="10" height="12" fill="#fff" stroke="#5a78a8"/><path d="M3 4.500h7M3 6.500h7M3 8.500h7M3 10.500h7" stroke="#8aa0c0"/><path d="M12.500 1v12M10.500 11.500l2 3 2-3z" stroke="#1c2c48" fill="#1c2c48" stroke-width=".8"/></svg>
<svg style="left:230px;top:117.5px" width="18" height="16" viewBox="0 0 18 16"><defs><linearGradient id="gf" x1="0" x2="1"><stop offset="0" stop-color="#6a6a6a"/><stop offset=".45" stop-color="#f4f4f4"/><stop offset=".7" stop-color="#a0a0a0"/><stop offset="1" stop-color="#5a5a5a"/></linearGradient></defs><path d="M1 .5h14l-.3 1.200-4.700 4v5c0 1.300-4 1.300-4 0v-5l-4.700-4z" fill="url(#gf)" stroke="#787878" stroke-width=".5"/><path d="M10.500 9v6M10.500 6.500h1.500M10.500 9.500h1.500M13 11.500h1M10.500 14.500h1.500" stroke="#909090" stroke-width=".8" fill="none"/><path d="M12 6.500h2.500" stroke="#f4d040" stroke-width="1.200"/><path d="M12 9.500h2.500" stroke="#b85c20" stroke-width="1.200"/><path d="M14 11.500h2.500" stroke="#18a0e0" stroke-width="1.200"/><path d="M12 14.500h2.500" stroke="#409838" stroke-width="1.200"/><path d="M14.500 6.500h1.500M14.500 9.500h1.500M14.500 14.500h1.500" stroke="#d8d8d0" stroke-width="1"/></svg>
<svg style="left:253px;top:117.5px" width="18" height="16" viewBox="0 0 18 16"><defs><linearGradient id="gf" x1="0" x2="1"><stop offset="0" stop-color="#6a6a6a"/><stop offset=".45" stop-color="#f4f4f4"/><stop offset=".7" stop-color="#a0a0a0"/><stop offset="1" stop-color="#5a5a5a"/></linearGradient></defs><path d="M1 .5h14l-.3 1.200-4.700 4v5c0 1.300-4 1.300-4 0v-5l-4.700-4z" fill="url(#gf)" stroke="#787878" stroke-width=".5"/><path d="M10.500 9v6M10.500 6.500h1.500M10.500 9.500h1.500M13 11.500h1M10.500 14.500h1.500" stroke="#909090" stroke-width=".8" fill="none"/><path d="M12 6.500h2.500" stroke="#f4d040" stroke-width="1.200"/><path d="M12 9.500h2.500" stroke="#b85c20" stroke-width="1.200"/><path d="M14 11.500h2.500" stroke="#18a0e0" stroke-width="1.200"/><path d="M12 14.500h2.500" stroke="#409838" stroke-width="1.200"/><path d="M14.500 6.500h1.500M14.500 9.500h1.500M14.500 14.500h1.500" stroke="#d8d8d0" stroke-width="1"/><g transform="translate(1 9.5) scale(1)"><path d="M0 0h7v1.500l2 1v2l-2-.5v3h-2.500v-1.500h-1.500l-1 1.500h-2v-2l1.500-1.500-1.500-1z" fill="#f2ac08" stroke="#c07c00" stroke-width=".6"/><path d="M1.500 1.200h4.500l-2 2.300" stroke="#f8d850" stroke-width=".9" fill="none"/></g></svg>
<div style="left:1px;top:138px;width:280px;height:22px;background:#fff;border:1px solid #b7ad83;border-radius:4px"></div>
<div style="left:265px;top:139px;width:15px;height:20px;background:linear-gradient(#faf8ee,#ebe6cb);border-left:1px solid #cfc8a6;border-radius:0 3px 3px 0"></div>
<svg style="left:268px;top:144px" width="10" height="10" viewBox="0 0 10 10"><path d="M1.500 1.500l7 7M8.500 1.500l-7 7" stroke="#4a3a10" stroke-width="1.700"/></svg>
<span class="t" style="left:4px;top:140px;font-size:12px;line-height:16px;height:16px;transform:scaleX(0.8690);transform-origin:0 0;color:#b6bace;">Поиск (Ctrl+Alt+M)</span>
<div style="left:0px;top:160px;width:281px;height:455px;background:#fff;border:1px solid #b7ad83;border-top:none;border-bottom:none"></div>
<svg style="left:3px;top:161px" width="18" height="17" viewBox="0 0 18 17"><defs><radialGradient id="gy" cx=".45" cy=".25" r=".8"><stop offset="0" stop-color="#fffbe4"/><stop offset=".5" stop-color="#f8e070"/><stop offset="1" stop-color="#eec430"/></radialGradient></defs><circle cx="9.900" cy="7.400" r="6" fill="url(#gy)" stroke="#dccc98" stroke-width=".7"/><g transform="translate(2.2 9.3) scale(0.88)"><path d="M0 0h7v1.500l2 1v2l-2-.5v3h-2.500v-1.500h-1.500l-1 1.500h-2v-2l1.500-1.500-1.500-1z" fill="#f2ac08" stroke="#c07c00" stroke-width=".6"/><path d="M1.500 1.200h4.500l-2 2.300" stroke="#f8d850" stroke-width=".9" fill="none"/></g></svg>
<span class="t" style="left:26.8px;top:162px;font-size:12px;line-height:16px;height:16px;transform:scaleX(0.9130);transform-origin:0 0;width:276.56px;overflow:hidden;color:#000;">EXT_Демо_ОбработкаЛюбойКомандыКонфигура</span>
<svg style="left:8px;top:184px" width="9" height="9" viewBox="0 0 9 9"><circle cx="4.500" cy="4.500" r="4" fill="#fff" stroke="#a8a8a8" stroke-width=".9"/><path d="M2.500 4.500h4" stroke="#777" stroke-width="1"/></svg>
<svg style="left:23px;top:181px" width="17" height="15" viewBox="0 0 17 15"><defs><linearGradient id="gpb" x1="0" y1="0" x2="0" y2="1"><stop offset="0" stop-color="#b4daf4"/><stop offset="1" stop-color="#6aa8dc"/></linearGradient></defs><rect x="1.300" y="7.500" width="8.500" height="6.300" rx="1.300" fill="url(#gpb)" stroke="#3a6aa8" stroke-width=".9"/><path d="M5.700 8.500V3.500h3.500" stroke="#111" stroke-width="1" stroke-dasharray="1.300 .9" fill="none"/><path d="M3.300 8.300h4.800l-2.400 2.900z" fill="#111"/><path d="M12 -.3l3.800 3.800-3.800 3.800-3.800-3.800z" fill="#fbe04c" stroke="#ecc43c" stroke-width=".5"/></svg>
<span class="t" style="left:45.8px;top:181px;font-size:12px;line-height:16px;height:16px;transform:scaleX(0.9039);transform-origin:0 0;color:#000;">Обработки</span>
<svg style="left:27px;top:203px" width="9" height="9" viewBox="0 0 9 9"><circle cx="4.500" cy="4.500" r="4" fill="#fff" stroke="#a8a8a8" stroke-width=".9"/><path d="M2.500 4.500h4" stroke="#777" stroke-width="1"/></svg>
<svg style="left:42px;top:200px" width="17" height="15" viewBox="0 0 17 15"><defs><linearGradient id="gpb" x1="0" y1="0" x2="0" y2="1"><stop offset="0" stop-color="#b4daf4"/><stop offset="1" stop-color="#6aa8dc"/></linearGradient></defs><rect x="1.300" y="7.500" width="8.500" height="6.300" rx="1.300" fill="url(#gpb)" stroke="#3a6aa8" stroke-width=".9"/><path d="M5.700 8.500V3.500h3.500" stroke="#111" stroke-width="1" stroke-dasharray="1.300 .9" fill="none"/><path d="M3.300 8.300h4.800l-2.400 2.900z" fill="#111"/><path d="M12 -.3l3.800 3.800-3.800 3.800-3.800-3.800z" fill="#fbe04c" stroke="#ecc43c" stroke-width=".5"/></svg>
<div style="left:63px;top:198px;width:217px;height:19px;background:#6d8ecb"></div>
<span class="t" style="left:65.8px;top:200px;font-size:12px;line-height:16px;height:16px;transform:scaleX(0.9077);transform-origin:0 0;width:235.75px;overflow:hidden;color:#fff;">EXT_Демо_ОбработкаЛюбойКомандыКон</span>
<svg style="left:46px;top:222px" width="9" height="9" viewBox="0 0 9 9"><circle cx="4.500" cy="4.500" r="4" fill="#fff" stroke="#a8a8a8" stroke-width=".9"/><path d="M2.500 4.500h4" stroke="#777" stroke-width="1"/></svg>
<svg style="left:63px;top:220px" width="14" height="13" viewBox="0 0 14 13"><rect x=".5" y=".5" width="13" height="12" fill="#f6f6f6" stroke="#7a8ea8"/><rect x=".5" y=".5" width="13" height="1.800" fill="#46648c" stroke="#46648c"/><path d="M2.500 4.500h6M2.500 6.500h4M2.500 8.500h5M2.500 10.500h3" stroke="#8a8a8a"/><path d="M9.500 4.500h2.500M7.500 6.500h4.500M8.500 8.500h3.500M6.500 10.500h5.500" stroke="#d0d0d0"/></svg>
<span class="t" style="left:85px;top:219px;font-size:12px;line-height:16px;height:16px;transform:scaleX(0.9477);transform-origin:0 0;color:#000;">Формы</span>
<svg style="left:82px;top:239px" width="14" height="13" viewBox="0 0 14 13"><rect x=".5" y=".5" width="13" height="12" fill="#f6f6f6" stroke="#7a8ea8"/><rect x=".5" y=".5" width="13" height="1.800" fill="#46648c" stroke="#46648c"/><path d="M2.500 4.500h6M2.500 6.500h4M2.500 8.500h5M2.500 10.500h3" stroke="#8a8a8a"/><path d="M9.500 4.500h2.500M7.500 6.500h4.500M8.500 8.500h3.500M6.500 10.500h5.500" stroke="#d0d0d0"/></svg>
<span class="t" style="left:103.4px;top:238px;font-size:12px;line-height:16px;height:16px;transform:scaleX(0.9210);transform-origin:0 0;color:#000;">Подписки</span>
<div style="left:1px;top:598px;width:279px;height:17px;background:#fbfaf3;border-top:1px solid #c2ba94;border-bottom:1px solid #c2ba94"></div>
<div style="left:1px;top:599px;width:20.5px;height:15px;background:linear-gradient(#fbfaf0,#eeead3);border-right:1px solid #c2ba94"></div>
<div style="left:21.5px;top:599px;width:195px;height:15px;background:linear-gradient(#fbf9ee,#efe9cc 60%,#f1ecd2);border-right:1px solid #c2ba94"></div>
<div style="left:259px;top:599px;width:21px;height:15px;background:linear-gradient(#fbfaf0,#eeead3);border-left:1px solid #c2ba94"></div>
<svg style="left:7px;top:602px" width="8" height="9" viewBox="0 0 8 9"><path d="M7 .5v8L.5 4.500z" fill="#c4c4c4"/></svg>
<svg style="left:266px;top:602px" width="8" height="9" viewBox="0 0 8 9"><path d="M1 .5v8l6.500-4z" fill="#8a8a8a"/></svg>
<div style="left:116px;top:604px;width:5px;height:5px;background:radial-gradient(circle at 65% 65%,#f4f0dc,#d2ccac);border-radius:3px"></div>
<div style="left:0px;top:615px;width:281px;height:20.5px;background:#f9f8ec"></div>
<div style="left:3.7px;top:615px;width:16.7px;height:20px;background:#e9e4cc;border:1px solid #c9c2a3;border-top:none;border-radius:0 0 6px 6px"></div>
<div style="left:27.2px;top:615px;width:15.5px;height:20px;background:#e9e4cc;border:1px solid #c9c2a3;border-top:none;border-radius:0 0 6px 6px"></div>
<div style="left:49.5px;top:615px;width:15.5px;height:20px;background:#e9e4cc;border:1px solid #c9c2a3;border-top:none;border-radius:0 0 6px 6px"></div>
<div style="left:71.2px;top:615px;width:16.1px;height:20px;background:#e9e4cc;border:1px solid #c9c2a3;border-top:none;border-radius:0 0 6px 6px"></div>
<div style="left:94.4px;top:615px;width:17.1px;height:20px;background:#e9e4cc;border:1px solid #c9c2a3;border-top:none;border-radius:0 0 6px 6px"></div>
<div style="left:118.3px;top:615px;width:17.3px;height:20px;background:#fdfdf8;border:1px solid #c5bea0;border-top:none;border-radius:0 0 6px 6px"></div>
<div style="left:121.3px;top:632.5px;width:11.3px;height:2px;background:#f6cf8c;border-radius:0 0 2px 2px"></div>
<div style="left:142.4px;top:615px;width:14.6px;height:20px;background:#e9e4cc;border:1px solid #c9c2a3;border-top:none;border-radius:0 0 6px 6px"></div>
<div style="left:163.3px;top:615px;width:18.2px;height:20px;background:#e9e4cc;border:1px solid #c9c2a3;border-top:none;border-radius:0 0 6px 6px"></div>
<div style="left:188px;top:615px;width:14.3px;height:20px;background:#e9e4cc;border:1px solid #c9c2a3;border-top:none;border-radius:0 0 6px 6px"></div>
<div style="left:208px;top:615px;width:15.7px;height:20px;background:#e9e4cc;border:1px solid #c9c2a3;border-top:none;border-radius:0 0 6px 6px"></div>
<div style="left:230.5px;top:615px;width:13.7px;height:20px;background:#e9e4cc;border:1px solid #c9c2a3;border-top:none;border-radius:0 0 6px 6px"></div>
<div style="left:250.1px;top:615px;width:16.5px;height:20px;background:#e9e4cc;border:1px solid #c9c2a3;border-top:none;border-radius:0 0 6px 6px"></div>
<div style="left:285px;top:96px;width:684px;height:539px;background:#fff;border:1px solid #a0a0a0;border-right-color:#fff;border-bottom-color:#fff"></div>
<div style="left:286px;top:97px;width:682px;height:537px;border:1px solid #606060;border-right-color:#e2e2e8;border-bottom-color:#e2e2e8"></div>
<div style="left:287px;top:98px;width:16px;height:519px;background:#f1eedb;background-image:repeating-conic-gradient(#e2dec6 0 25%,#f4f2e0 0 50%);background-size:2px 2px"></div>
<div id="code">
<div class="l" style="top:17px"><span class="b">#КонецОбласти</span></div>
<div class="l" style="top:49px"><span class="r">Функция</span> Подписки<span class="r">(</span>Подписки<span class="r">)</span> <span class="r">Экспорт</span></div>
<div class="l" style="top:81px">    Подписка <span class="r">=</span> Подписки<span class="r">.</span>Добавить<span class="r">();</span></div>
<div class="l" style="top:97px">    <span class="g">// Это событие фреймворка, в платформе такого нет.</span></div>
<div class="l" style="top:113px">    Подписка<span class="r">.</span>Событие    <span class="r">=</span> <span class="k">"ОбработкаКомандыФормы"</span><span class="r">;</span></div>
<div class="l" style="top:129px">    Подписка<span class="r">.</span>Издатель   <span class="r">=</span> <span class="k">"Справочник.Номенклатура.Форма.ФормаЭлемента"</span><span class="r">;</span></div>
<div class="l" style="top:145px">    <span class="g">// Здесь нужно указывать имя команды, а не элемента.</span></div>
<div class="l" style="top:161px">    Подписка<span class="r">.</span>Элемент    <span class="r">=</span> <span class="k">"КомандаФормы"</span><span class="r">;</span></div>
<div class="l" style="top:177px">    <span class="g">// Обработчик переопределен.</span></div>
<div class="l" style="top:193px">    Подписка<span class="r">.</span>Обработчик <span class="r">=</span> <span class="k">"КомандаФормы"</span><span class="r">;</span></div>
<div class="l" style="top:209px">    Подписка<span class="r">.</span>Описание   <span class="r">=</span> <span class="k">"Выводит сообщение о событии"</span><span class="r">;</span></div>
<div class="l" style="top:241px">    Подписка <span class="r">=</span> Подписки<span class="r">.</span>Добавить<span class="r">();</span></div>
<div class="l" style="top:257px">    Подписка<span class="r">.</span>Событие    <span class="r">=</span> <span class="k">"ОбработкаКоманды"</span><span class="r">;</span></div>
<div class="l" style="top:273px">    Подписка<span class="r">.</span>Издатель   <span class="r">=</span> <span class="k">"Справочник.Номенклатура.Команда.КомандаОбъекта1"</span><span class="r">;</span></div>
<div class="l" style="top:289px">    <span class="g">// Обработчик переопределен.</span></div>
<div class="l" style="top:305px">    Подписка<span class="r">.</span>Обработчик <span class="r">=</span> <span class="k">"КомандаОбъекта"</span><span class="r">;</span></div>
<div class="l" style="top:321px">    Подписка<span class="r">.</span>Описание   <span class="r">=</span> <span class="k">"Выводит сообщение о событии"</span><span class="r">;</span></div>
<div class="l" style="top:353px">    Подписка <span class="r">=</span> Подписки<span class="r">.</span>Добавить<span class="r">();</span></div>
<div class="l" style="top:369px">    Подписка<span class="r">.</span>Событие    <span class="r">=</span> <span class="k">"ОбработкаКоманды"</span><span class="r">;</span></div>
<div class="l" style="top:385px">    Подписка<span class="r">.</span>Издатель   <span class="r">=</span> <span class="k">"ОбщаяКоманда.ОбщаяКоманда1"</span><span class="r">;</span></div>
<div class="l" style="top:401px">    <span class="g">// Обработчик переопределен.</span></div>
<div class="l" style="top:417px">    Подписка<span class="r">.</span>Обработчик <span class="r">=</span> <span class="k">"ОбщаяКоманда"</span><span class="r">;</span></div>
<div class="l" style="top:433px">    Подписка<span class="r">.</span>Описание   <span class="r">=</span> <span class="k">"Выводит сообщение о событии"</span><span class="r">;</span></div>
<div class="l" style="top:465px">    <span class="r">Возврат Истина;</span></div>
<div class="l" style="top:497px"><span class="r">КонецФункции</span></div>
<div style="left:5px;top:0;width:1px;height:512px;background:#555"></div>
<div style="left:5px;top:24px;width:5px;height:1px;background:#555"></div>
<div style="left:5px;top:504px;width:5px;height:1px;background:#555"></div>
<div style="left:1px;top:52px;width:9px;height:9px;background:#fff;border:1px solid #555"></div>
<div style="left:3px;top:56px;width:5px;height:1px;background:#333"></div>
</div>
<div style="left:951px;top:98px;width:16px;height:519.5px;background:#fbfaf3;border-left:1px solid #c2ba94"></div>
<div style="left:952px;top:98px;width:15px;height:20.5px;background:linear-gradient(90deg,#fbfaf0,#ece7cf);border-bottom:1px solid #c2ba94"></div>
<div style="left:952px;top:242px;width:15px;height:322.5px;background:linear-gradient(90deg,#fbf9ee,#f1ecd0 55%,#e1dbba);border-bottom:1px solid #c2ba94;border-top:1px solid #c2ba94"></div>
<div style="left:957px;top:401px;width:5px;height:5px;background:radial-gradient(circle at 65% 65%,#f4f0dc,#d2ccac);border-radius:3px"></div>
<div style="left:952px;top:595.5px;width:15px;height:22px;background:linear-gradient(90deg,#fbfaf0,#ece7cf);border-top:1px solid #c2ba94"></div>
<svg style="left:955px;top:103px" width="9" height="8" viewBox="0 0 9 8"><defs><linearGradient id="gt" x1="0" y1="0" x2="0" y2="1"><stop offset="0" stop-color="#b0b0b0"/><stop offset="1" stop-color="#6a6a6a"/></linearGradient></defs><path d="M4.500.5L8.500 7.500h-8z" fill="url(#gt)"/></svg>
<svg style="left:955px;top:603px" width="9" height="8" viewBox="0 0 9 8"><path d="M4.500 7.500L8.500.5h-8z" fill="url(#gt)"/></svg>
<div style="left:287px;top:617px;width:680px;height:16px;background:#fbfaf3;border-top:1px solid #c2ba94"></div>
<div style="left:287px;top:618px;width:21px;height:15px;background:linear-gradient(#fbfaf0,#ece7cf);border-right:1px solid #c2ba94"></div>
<div style="left:308px;top:618px;width:136.5px;height:15px;background:linear-gradient(#fbf9ee,#efe9cc 60%,#f1ecd2);border-right:1px solid #c2ba94"></div>
<div style="left:930.5px;top:618px;width:21px;height:15px;background:linear-gradient(#fbfaf0,#ece7cf);border-left:1px solid #c2ba94;border-right:1px solid #c2ba94"></div>
<svg style="left:293px;top:621px" width="8" height="9" viewBox="0 0 8 9"><path d="M7 .5v8L.5 4.500z" fill="#c4c4c4"/></svg>
<svg style="left:937px;top:621px" width="8" height="9" viewBox="0 0 8 9"><path d="M1 .5v8l6.500-4z" fill="#808080"/></svg>
<div style="left:373px;top:623px;width:5px;height:5px;background:radial-gradient(circle at 65% 65%,#f4f0dc,#d2ccac);border-radius:3px"></div>
<div style="left:18px;top:641px;width:3px;height:14px;background:repeating-linear-gradient(#c9c2a0 0,#c9c2a0 1px,transparent 1px,transparent 2px)"></div>
<svg style="left:27px;top:641px" width="18" height="15" viewBox="0 0 18 15"><path d="M1.500 1.500v12M1.500 4.500h2M1.500 7.500h2M1.500 9.500h2M1.500 12.500h2" stroke="#909090" stroke-width=".9" fill="none"/><path d="M1 1.500h2.500" stroke="#e82020" stroke-width="1.200"/><path d="M3.500 4.500h2.500" stroke="#f4d040" stroke-width="1.200"/><path d="M3.500 7.500h2.500" stroke="#b85c20" stroke-width="1.200"/><path d="M3.500 9.500h3" stroke="#18a0e0" stroke-width="1.200"/><path d="M3.500 12.500h2.500" stroke="#409838" stroke-width="1.200"/><g transform="translate(7 7) scale(1)"><path d="M0 0h7v1.500l2 1v2l-2-.5v3h-2.500v-1.500h-1.500l-1 1.500h-2v-2l1.500-1.500-1.500-1z" fill="#f2ac08" stroke="#c07c00" stroke-width=".6"/><path d="M1.500 1.200h4.500l-2 2.300" stroke="#f8d850" stroke-width=".9" fill="none"/></g></svg>
<svg style="left:49px;top:653px" width="6" height="3" viewBox="0 0 6 3"><path d="M0 0h5l-2.500 3z" fill="#222"/></svg>
<div style="left:67px;top:641px;width:3px;height:14px;background:repeating-linear-gradient(#c9c2a0 0,#c9c2a0 1px,transparent 1px,transparent 2px)"></div>
<svg style="left:77px;top:641px" width="15" height="15" viewBox="0 0 15 15"><defs><pattern id="cka" width="4" height="4" patternUnits="userSpaceOnUse"><rect width="4" height="4" fill="#fff"/><rect width="2" height="2" fill="#222"/><rect x="2" y="2" width="2" height="2" fill="#222"/></pattern></defs><path d="M1.500 1v14" stroke="#c88820" stroke-width="1.400"/><path d="M2.500 1.500c3 1 6-1 10 0v8c-4-1-7 1-10 0z" fill="url(#cka)" stroke="#555" stroke-width=".4"/></svg>
<svg style="left:100px;top:641px" width="16" height="15" viewBox="0 0 16 15"><defs><pattern id="ckb" width="4" height="4" patternUnits="userSpaceOnUse"><rect width="4" height="4" fill="#dcdcdc"/><rect width="2" height="2" fill="#b0b0b0"/><rect x="2" y="2" width="2" height="2" fill="#b0b0b0"/></pattern></defs><path d="M1.500 1.500v13" stroke="#b0b0b0" stroke-width="1.200"/><path d="M2 1.500h11v9.500h-11z" fill="url(#ckb)"/><path d="M5.500 0c4 0 6 1.500 6 4.500h2.500l-4 4.500-4-4.500h2.500c0-1.500-1-2.500-3-3z" fill="#a4bca4" fill-opacity=".92"/></svg>
<svg style="left:123px;top:641px" width="16" height="15" viewBox="0 0 16 15"><defs><pattern id="ckb" width="4" height="4" patternUnits="userSpaceOnUse"><rect width="4" height="4" fill="#dcdcdc"/><rect width="2" height="2" fill="#b0b0b0"/><rect x="2" y="2" width="2" height="2" fill="#b0b0b0"/></pattern></defs><path d="M1.500 1.500v13" stroke="#b0b0b0" stroke-width="1.200"/><path d="M2 1.500h11v9.500h-11z" fill="url(#ckb)"/><path d="M12.500 0c-4 0-6 1.500-6 4.500h-2.500l4 4.500 4-4.500h-2.500c0-1.500 1-2.500 3-3z" fill="#a4bca4" fill-opacity=".92"/></svg>
<svg style="left:144px;top:641px" width="16" height="15" viewBox="0 0 16 15"><defs><pattern id="ckb" width="4" height="4" patternUnits="userSpaceOnUse"><rect width="4" height="4" fill="#dcdcdc"/><rect width="2" height="2" fill="#b0b0b0"/><rect x="2" y="2" width="2" height="2" fill="#b0b0b0"/></pattern></defs><path d="M4.500 3v12" stroke="#b0b0b0" stroke-width="1.200"/><path d="M5 3h10v9h-10z" fill="url(#ckb)"/><path d="M1 .5l6.500 6.500M7.500 .5l-6.500 6.500" stroke="#c0989c" stroke-width="1.700"/></svg>
<div style="left:166px;top:639px;width:1px;height:19px;background:linear-gradient(#ece8d2,#c9c2a0 25%,#c9c2a0 75%,#ece8d2)"></div>
<svg style="left:175px;top:640px" width="16" height="16" viewBox="0 0 16 16"><path d="M5.500 0v16" stroke="#b8b8b8" stroke-dasharray="1 1"/><path d="M0 2.500h4M0 10.500h4M0 12.500h4" stroke="#a8a8a8"/><path d="M6 2.500h9M6 10.500h9M6 12.500h4" stroke="#a8a8a8"/><rect x="6.500" y="4.500" width="8.500" height="2" fill="#98acc4"/><rect x="6.500" y="7.500" width="4.500" height="2" fill="#98acc4"/></svg>
<svg style="left:196px;top:640px" width="16" height="16" viewBox="0 0 16 16"><path d="M7 1.500h9M7 3.500h9M7 11.500h9M7 13.500h9M9 15.500h7" stroke="#b0b0b0" stroke-dasharray="2.500 .8"/><rect x="9" y="5" width="7" height="2" fill="#8c8c8c"/><rect x="9" y="8.500" width="5" height="1.500" fill="#a0a0a0"/><path d="M0 6h4.500v-2.500l4.500 4-4.500 4V9H0z" fill="#94a8c0"/></svg>
<svg style="left:219px;top:640px" width="16" height="16" viewBox="0 0 16 16"><path d="M7 1.500h9M7 3.500h9M7 11.500h9M7 13.500h9M9 15.500h7" stroke="#b0b0b0" stroke-dasharray="2.500 .8"/><rect x="9" y="5" width="7" height="2" fill="#8c8c8c"/><rect x="9" y="8.500" width="5" height="1.500" fill="#a0a0a0"/><path d="M9 6H4.500v-2.500L0 7.500l4.500 4V9H9z" fill="#94a8c0"/></svg>
<div style="left:240px;top:639px;width:1px;height:19px;background:linear-gradient(#ece8d2,#c9c2a0 25%,#c9c2a0 75%,#ece8d2)"></div>
<svg style="left:248px;top:640px" width="17" height="16" viewBox="0 0 17 16"><path d="M1.500 1.500h8l3 3v9h-11z" fill="#fff" stroke="#5a78a8"/><path d="M9.500 1.500v3h3" fill="#e4ecf5" stroke="#5a78a8"/><path d="M3 5.500h5M3 7.500h7M3 9.500h4" stroke="#8aa0c0"/><path d="M15 6c1 4-1 7-5 7v2.500l-4.500-4 4.500-4V10c2 0 4-1 5-4z" fill="#3aa02a" stroke="#1f7a1f" stroke-width=".5"/></svg>
<svg style="left:269px;top:653px" width="6" height="3" viewBox="0 0 6 3"><path d="M0 0h5l-2.500 3z" fill="#222"/></svg>
<div style="left:1px;top:662px;width:171.4px;height:20px;background:#b2b2b2;border:1px solid #c9c19a;border-top-color:#b8b08a"></div>
<svg style="left:2px;top:665px" width="18" height="15" viewBox="0 0 18 15"><path d="M1.500 1.500v12M1.500 4.500h2M1.500 7.500h2M1.500 9.500h2M1.500 12.500h2" stroke="#909090" stroke-width=".9" fill="none"/><path d="M1 1.500h2.500" stroke="#e82020" stroke-width="1.200"/><path d="M3.500 4.500h2.500" stroke="#f4d040" stroke-width="1.200"/><path d="M3.500 7.500h2.500" stroke="#b85c20" stroke-width="1.200"/><path d="M3.500 9.500h3" stroke="#18a0e0" stroke-width="1.200"/><path d="M3.500 12.500h2.500" stroke="#409838" stroke-width="1.200"/><g transform="translate(7 7) scale(1)"><path d="M0 0h7v1.500l2 1v2l-2-.5v3h-2.500v-1.500h-1.500l-1 1.500h-2v-2l1.500-1.500-1.500-1z" fill="#f2ac08" stroke="#c07c00" stroke-width=".6"/><path d="M1.500 1.200h4.500l-2 2.300" stroke="#f8d850" stroke-width=".9" fill="none"/></g></svg>
<span class="t" style="left:20.3px;top:665px;font-size:12px;line-height:16px;height:16px;transform:scaleX(0.8998);transform-origin:0 0;color:#000;">Расширения конфигурации</span>
<div style="left:174.4px;top:662px;width:170.7px;height:20px;background:#b2b2b2;border:1px solid #c9c19a;border-top-color:#b8b08a"></div>
<svg style="left:178.6px;top:665px" width="11" height="14" viewBox="0 0 11 14"><path d="M.5.5h7l3 3v10h-10z" fill="#fff" stroke="#8aa0b8"/><path d="M7.500.5v3h3" fill="#dfe8f2" stroke="#8aa0b8"/><path d="M2 4.500h4M2 6.500h7M2 8.500h7M2 10.500h7" stroke="#a8b8cc"/></svg>
<span class="t" style="left:192.7px;top:665px;font-size:12px;line-height:16px;height:16px;transform:scaleX(0.9036);transform-origin:0 0;color:#000;">Обработка EXT_Демо_Пос...</span>
<div style="left:347.6px;top:662px;width:170.2px;height:20px;background:#b2b2b2;border:1px solid #c9c19a;border-top-color:#b8b08a"></div>
<svg style="left:351.8px;top:665px" width="11" height="14" viewBox="0 0 11 14"><path d="M.5.5h7l3 3v10h-10z" fill="#fff" stroke="#8aa0b8"/><path d="M7.500.5v3h3" fill="#dfe8f2" stroke="#8aa0b8"/><path d="M2 4.500h4M2 6.500h7M2 8.500h7M2 10.500h7" stroke="#a8b8cc"/></svg>
<span class="t" style="left:365.7px;top:665px;font-size:12px;line-height:16px;height:16px;transform:scaleX(0.9036);transform-origin:0 0;color:#000;">Обработка EXT_Демо_Пос...</span>
<div style="left:520.3px;top:662px;width:170.7px;height:20px;background:#afc9e7;border:1px solid #c9c19a;border-top-color:#b8b08a"></div>
<svg style="left:524.5px;top:665px" width="11" height="14" viewBox="0 0 11 14"><path d="M.5.5h7l3 3v10h-10z" fill="#fff" stroke="#8aa0b8"/><path d="M7.500.5v3h3" fill="#dfe8f2" stroke="#8aa0b8"/><path d="M2 4.500h4M2 6.500h7M2 8.500h7M2 10.500h7" stroke="#a8b8cc"/></svg>
<span class="t" style="left:538.4px;top:665px;font-size:12px;line-height:16px;height:16px;transform:scaleX(0.8948);transform-origin:0 0;color:#000;">Обработка EXT_Демо_Обр...</span>
<span class="t" style="left:3.7px;top:686px;font-size:12px;line-height:16px;height:16px;transform:scaleX(0.9225);transform-origin:0 0;color:#000;">Для получения подсказки нажмите F1</span>
<div style="left:1px;top:684px;width:641.5px;height:18.5px;border:1px solid #e2dec6"></div>
<div style="left:648px;top:684px;width:28.5px;height:18.5px;border:1px solid #e2dec6"></div>
<span class="t" style="left:651px;top:686px;font-size:12px;line-height:16px;height:16px;transform:scaleX(0.8101);transform-origin:0 0;color:#bba96f;">CAP</span>
<div style="left:682px;top:684px;width:32.5px;height:18.5px;border:1px solid #e2dec6"></div>
<span class="t" style="left:685.1px;top:686px;font-size:12px;line-height:16px;height:16px;transform:scaleX(0.8782);transform-origin:0 0;color:#000;">NUM</span>
<div style="left:720px;top:684px;width:31px;height:18.5px;border:1px solid #e2dec6"></div>
<span class="t" style="left:723px;top:686px;font-size:12px;line-height:16px;height:16px;transform:scaleX(0.8841);transform-origin:0 0;color:#bba96f;">OVR</span>
<div style="left:756px;top:684px;width:24px;height:18.5px;border:1px solid #e2dec6"></div>
<span class="t" style="left:758.7px;top:686px;font-size:12px;line-height:16px;height:16px;transform:scaleX(0.8152);transform-origin:0 0;color:#000;">ru</span>
<svg style="left:770px;top:692px" width="6" height="3" viewBox="0 0 6 3"><path d="M0 0h5l-2.500 3z" fill="#222"/></svg>
<div style="left:785.4px;top:684px;width:154px;height:18.5px;border:1px solid #e2dec6"></div>
<span class="t" style="left:787.7px;top:686px;font-size:12px;line-height:16px;height:16px;transform:scaleX(0.8639);transform-origin:0 0;color:#000;">Стр: 51</span>
<span class="t" style="left:865px;top:686px;font-size:12px;line-height:16px;height:16px;transform:scaleX(0.9067);transform-origin:0 0;color:#000;">Кол: 2</span>
<svg style="left:954px;top:689px" width="15" height="15" viewBox="0 0 15 15"><path d="M15 1.300L1.300 15M15 5.300L5.300 15M15 9.300L9.300 15" stroke="#b9b18a" stroke-width="1.500"/></svg>
<div style="left:0px;top:704px;width:969px;height:2px;background:#d6d3ce"></div>
<div style="left:0px;top:706px;width:969px;height:1px;background:#808080"></div>
</body></html>
